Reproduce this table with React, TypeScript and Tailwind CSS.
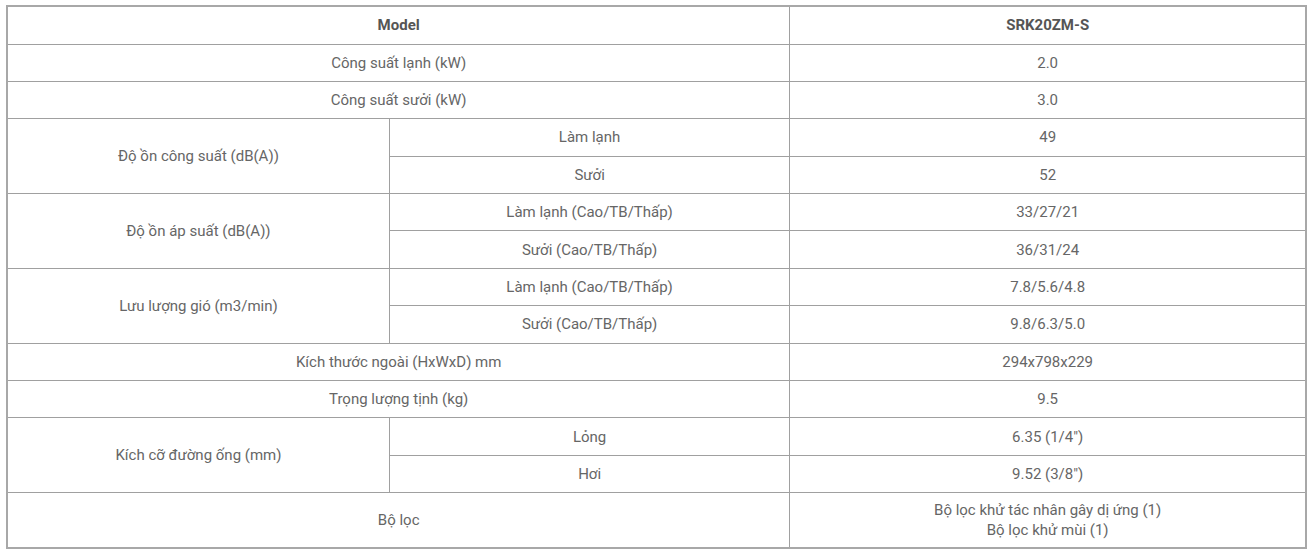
import React from 'react';

type Row = {
  label: string;
  subs?: { name: string; value: string }[];
  value?: React.ReactNode;
};

const rows: Row[] = [
  { label: 'Công suất lạnh (kW)', value: '2.0' },
  { label: 'Công suất sưởi (kW)', value: '3.0' },
  {
    label: 'Độ ồn công suất (dB(A))',
    subs: [
      { name: 'Làm lạnh', value: '49' },
      { name: 'Sưởi', value: '52' },
    ],
  },
  {
    label: 'Độ ồn áp suất (dB(A))',
    subs: [
      { name: 'Làm lạnh (Cao/TB/Thấp)', value: '33/27/21' },
      { name: 'Sưởi (Cao/TB/Thấp)', value: '36/31/24' },
    ],
  },
  {
    label: 'Lưu lượng gió (m3/min)',
    subs: [
      { name: 'Làm lạnh (Cao/TB/Thấp)', value: '7.8/5.6/4.8' },
      { name: 'Sưởi (Cao/TB/Thấp)', value: '9.8/6.3/5.0' },
    ],
  },
  { label: 'Kích thước ngoài (HxWxD) mm', value: '294x798x229' },
  { label: 'Trọng lượng tịnh (kg)', value: '9.5' },
  {
    label: 'Kích cỡ đường ống (mm)',
    subs: [
      { name: 'Lỏng', value: '6.35 (1/4")' },
      { name: 'Hơi', value: '9.52 (3/8")' },
    ],
  },
  {
    label: 'Bộ lọc',
    value: (
      <>
        Bộ lọc khử tác nhân gây dị ứng (1)
        <br />
        Bộ lọc khử mùi (1)
      </>
    ),
  },
];

const cell = 'border border-[#a0a0a0] text-center align-middle px-2 py-[7px] leading-[20px]';

const App: React.FC = () => {
  return (
    <div className="min-h-[551px] w-[1312px] bg-white pt-[5px] pl-[6px]" style={{ fontFamily: 'Roboto, "Noto Sans", sans-serif' }}>
      <table className="w-[1301px] border-collapse border-2 border-[#a8a8a8] text-[15px] text-[#666]">
        <colgroup>
          <col className="w-[383px]" />
          <col className="w-[401px]" />
          <col className="w-[517px]" />
        </colgroup>
        <tbody>
          <tr className="h-[38px]">
            <td colSpan={2} className={`${cell} font-bold text-[#555]`}>Model</td>
            <td className={`${cell} font-bold text-[#555]`}>SRK20ZM-S</td>
          </tr>
          {rows.map((row) =>
            row.subs ? (
              row.subs.map((s, i) => (
                <tr key={row.label + i} className="h-[37.4px]">
                  {i === 0 && (
                    <td rowSpan={row.subs!.length} className={cell}>{row.label}</td>
                  )}
                  <td className={cell}>{s.name}</td>
                  <td className={cell}>{s.value}</td>
                </tr>
              ))
            ) : (
              <tr key={row.label} className="h-[37.4px]">
                <td colSpan={2} className={cell}>{row.label}</td>
                <td className={cell}>{row.value}</td>
              </tr>
            )
          )}
        </tbody>
      </table>
    </div>
  );
};

export default App;
